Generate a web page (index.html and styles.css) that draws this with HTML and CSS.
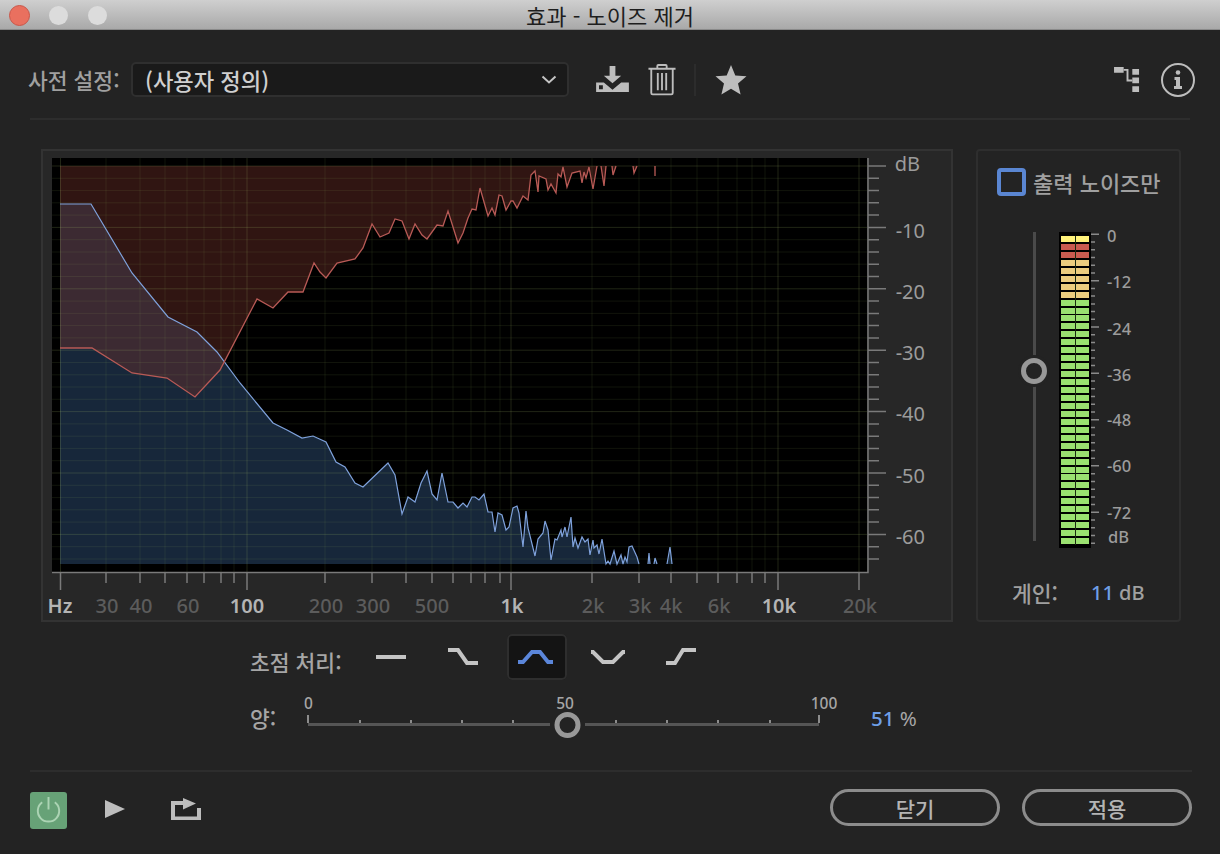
FILE: index.html
```html
<!DOCTYPE html>
<html lang="ko">
<head>
<meta charset="utf-8">
<title>효과 - 노이즈 제거</title>
<link rel="stylesheet" href="styles.css">
</head>
<body>
<div class="window">
  <header class="titlebar">
    <div class="lights"><span class="light red"></span><span class="light grey"></span><span class="light grey"></span></div>
    <div class="title">효과 - 노이즈 제거</div>
  </header>

  <section class="preset">
    <span class="preset-label">사전 설정:</span>
    <div class="select">
      <span>(사용자 정의)</span>
      <svg class="chev" viewBox="0 0 16 10"><path d="M1.5 1.5 8 7.500l6.500-6"/></svg>
    </div>
    <svg class="tool dl" viewBox="0 0 36 28"><path class="solid" d="M15 0h6v10h6L18 18 9 10h6z"/><path class="solid" fill-rule="evenodd" d="M1 17h8l9 7.500L27 17h8v10H1zM4 20v4h4v-4z"/></svg>
    <svg class="tool trash" viewBox="0 0 30 34"><path class="line" d="M.5 5.500h29M10 5V2.500q0-1 1-1h8q1 0 1 1V5M3.500 6v25.500q0 1.500 1.500 1.500h20q1.500 0 1.500-1.500V6M10.500 10v18.500M15 10v18.500M19.500 10v18.500"/></svg>
    <span class="tool-sep"></span>
    <svg class="tool star" viewBox="0 0 32 30"><path class="solid" d="M16 0l4.300 10.400 11.200.9-8.500 7.300 2.600 11L16 23.700 6.400 29.600l2.600-11L.5 11.300l11.200-.9z"/></svg>
    <svg class="tool route" viewBox="0 0 28 26"><path class="solid" d="M0 0h10v6H0zM19 2h7v6h-7zM19 11h7v6h-7zM19 20h7v6h-7z"/><path class="line" d="M10 3h4v11h5"/></svg>
    <svg class="tool info" viewBox="0 0 36 36"><circle class="line" cx="18" cy="18" r="16"/><circle class="solid" cx="18" cy="10.500" r="2.300"/><path class="solid" d="M14.500 15h5.500v9h2v3h-8v-3h2v-6h-1.500z"/></svg>
  </section>

  <section class="main">
    <div class="graph">
      <svg class="plot" viewBox="41 149 912 473">
        <rect class="bg-black" x="52" y="158" width="815" height="414"/>
        <path class="blue-fill" d="M60 564V204H91L132 273 168 317 197 332 217 352 240 383 273 423 287 430 302 438 313 436 326 442 336 462 345 467 355 483 363 487 388 463 395 475 402 514 408 497 415 502 421 483 427 471 432 494 437 500 442 473 448 502 453 502 458 508 463 503 467 507 472 497 475 497 479 500 484 494 488 512 492 512 495 532 498 513 502 515 506 530 509 527 513 508 517 506 519 513 523 547 526 511 528 528 535 556 538 539 543 533 545 521 548 530 551 560 555 539 557 540 561 530 562 537 565 527 567 537 571 517 573 547 575 538 578 548 582 537 585 542 588 539 590 555 593 540 594 548 597 545 599 554 602 539 606 564 608 561 610 564 614 551 617 564 621 555 623 564 625 557 627 562 629 547 632 546 637 557 639 564ZM648 564 649 553 650 564ZM654 564 655 558 657 564ZM667 564 670 547 672 564Z"/>
        <path class="red-fill" d="M60 166V348H92L132 373 167 378 195 397 220 370 257 299 273 308 288 292 303 292 314 263 320 272 326 278 337 263 355 259 363 248 372 224 380 237 389 233 395 219 402 221 409 239 415 224 422 235 427 239 437 225 443 226 448 211 453 227 458 243 463 233 468 218 472 209 476 210 480 188 488 216 492 208 495 215 499 195 502 196 506 210 511 201 513 201 517 208 523 196 528 200 531 175 535 171 538 192 539 176 546 179 548 190 551 184 556 193 558 174 561 177 563 167 567 187 572 173 580 171 582 183 584 172 586 178 589 167 593 189 597 166 601 166 604 186 606 166ZM612 166 613 175 616 166ZM633 166 634 173 637 166ZM654.500 166 655 176 655.500 166Z"/>
        <path class="grid" d="M52 178.300H867M52 190.600H867M52 202.800H867M52 215.100H867M52 239.700H867M52 252H867M52 264.200H867M52 276.500H867M52 301.100H867M52 313.400H867M52 325.600H867M52 337.900H867M52 362.500H867M52 374.800H867M52 387H867M52 399.300H867M52 423.900H867M52 436.200H867M52 448.400H867M52 460.700H867M52 485.300H867M52 497.600H867M52 509.800H867M52 522.100H867M52 546.700H867M52 559H867M106 158V572M140 158V572M165 158V572M187 158V572M204 158V572M221 158V572M234 158V572M325 158V572M372 158V572M406 158V572M432 158V572M453 158V572M471 158V572M485 158V572M500 158V572M592 158V572M639 158V572M671 158V572M697 158V572M718 158V572M737 158V572M752 158V572M765 158V572"/>
        <path class="grid-major" d="M52 166H867M52 227.400H867M52 288.800H867M52 350.200H867M52 411.600H867M52 473H867M52 534.400H867M60.500 158V572M247 158V572M511 158V572M778 158V572M859 158V572"/>
        <path class="blue-line" d="M60 204H91L132 273 168 317 197 332 217 352 240 383 273 423 287 430 302 438 313 436 326 442 336 462 345 467 355 483 363 487 388 463 395 475 402 514 408 497 415 502 421 483 427 471 432 494 437 500 442 473 448 502 453 502 458 508 463 503 467 507 472 497 475 497 479 500 484 494 488 512 492 512 495 532 498 513 502 515 506 530 509 527 513 508 517 506 519 513 523 547 526 511 528 528 535 556 538 539 543 533 545 521 548 530 551 560 555 539 557 540 561 530 562 537 565 527 567 537 571 517 573 547 575 538 578 548 582 537 585 542 588 539 590 555 593 540 594 548 597 545 599 554 602 539 606 564 608 561 610 564 614 551 617 564 621 555 623 564 625 557 627 562 629 547 632 546 637 557 639 564M648 564 649 553 650 564M654 564 655 558 657 564M667 564 670 547 672 564"/>
        <path class="red-line" d="M60 348H92L132 373 167 378 195 397 220 370 257 299 273 308 288 292 303 292 314 263 320 272 326 278 337 263 355 259 363 248 372 224 380 237 389 233 395 219 402 221 409 239 415 224 422 235 427 239 437 225 443 226 448 211 453 227 458 243 463 233 468 218 472 209 476 210 480 188 488 216 492 208 495 215 499 195 502 196 506 210 511 201 513 201 517 208 523 196 528 200 531 175 535 171 538 192 539 176 546 179 548 190 551 184 556 193 558 174 561 177 563 167 567 187 572 173 580 171 582 183 584 172 586 178 589 167 593 189 597 166M601 166 604 186 606 166M612 166 613 175 616 166M633 166 634 173 637 166M655 166V176"/>
        <path class="axis" d="M52 572.500H868V158M106 572V583M140 572V583M165 572V583M187 572V583M204 572V583M221 572V583M234 572V583M325 572V583M372 572V583M406 572V583M432 572V583M453 572V583M471 572V583M485 572V583M500 572V583M592 572V583M639 572V583M671 572V583M697 572V583M718 572V583M737 572V583M752 572V583M765 572V583M60.500 572V590M247 572V590M511 572V590M778 572V590M859 572V590M868 178.300H879M868 190.600H879M868 202.800H879M868 215.100H879M868 239.700H879M868 252H879M868 264.200H879M868 276.500H879M868 301.100H879M868 313.400H879M868 325.600H879M868 337.900H879M868 362.500H879M868 374.800H879M868 387H879M868 399.300H879M868 423.900H879M868 436.200H879M868 448.400H879M868 460.700H879M868 485.300H879M868 497.600H879M868 509.800H879M868 522.100H879M868 546.700H879M868 559H879M868 166H886M868 227.400H886M868 288.800H886M868 350.200H886M868 411.600H886M868 473H886M868 534.400H886"/>
        <g class="xl">
          <text class="hi" x="60" y="613">Hz</text>
          <text x="107" y="613">30</text><text x="141" y="613">40</text><text x="188" y="613">60</text>
          <text class="hi" x="247" y="613">100</text>
          <text x="326" y="613">200</text><text x="373" y="613">300</text><text x="432" y="613">500</text>
          <text class="hi" x="512" y="613">1k</text>
          <text x="593" y="613">2k</text><text x="640" y="613">3k</text><text x="671" y="613">4k</text><text x="719" y="613">6k</text>
          <text class="hi" x="779" y="613">10k</text>
          <text x="860" y="613">20k</text>
        </g>
        <g class="yl">
          <text x="920" y="171">dB</text><text x="925" y="238">-10</text><text x="925" y="299">-20</text><text x="925" y="360">-30</text><text x="925" y="421">-40</text><text x="925" y="483">-50</text><text x="925" y="544">-60</text>
        </g>
      </svg>
    </div>

    <aside class="side">
      <label class="check"><span class="box"></span><span>출력 노이즈만</span></label>
      <div class="meter-row">
        <div class="vslider"><span class="vthumb"></span></div>
        <div class="meter"></div>
        <svg class="scale" viewBox="1092 222 70 330">
          <path class="tick" d="M1092 242H1096M1092 249.800H1096M1092 257.500H1096M1092 265.200H1096M1092 273H1096M1092 288.400H1096M1092 296.100H1096M1092 303.900H1096M1092 311.600H1096M1092 319.300H1096M1092 334.700H1096M1092 342.500H1096M1092 350.200H1096M1092 357.900H1096M1092 365.600H1096M1092 381H1096M1092 388.800H1096M1092 396.500H1096M1092 404.200H1096M1092 412H1096M1092 427.400H1096M1092 435.100H1096M1092 442.800H1096M1092 450.500H1096M1092 458.300H1096M1092 473.700H1096M1092 481.400H1096M1092 489.200H1096M1092 496.900H1096M1092 504.600H1096M1092 520H1096M1092 527.800H1096M1092 535.500H1096M1092 543.200H1096M1092 234.300H1100M1092 280.700H1100M1092 327H1100M1092 373.300H1100M1092 419.700H1100M1092 465.800H1100M1092 512.300H1100"/>
          <g class="sl">
            <text x="1108" y="242">0</text><text x="1108" y="288">-12</text><text x="1108" y="335">-24</text><text x="1108" y="381">-36</text><text x="1108" y="426">-48</text><text x="1108" y="472">-60</text><text x="1108" y="519">-72</text><text x="1109" y="543">dB</text>
          </g>
        </svg>
      </div>
      <div class="gain"><span>게인:</span><span class="gain-val"><b>11</b> dB</span></div>
    </aside>
  </section>

  <section class="focus">
    <span class="ctl-label">초점 처리:</span>
    <div class="shapes">
      <button class="shape"><svg viewBox="0 0 60 46"><path d="M15 23H45"/></svg></button>
      <button class="shape"><svg viewBox="0 0 60 46"><path d="M14 16H24L33 29H44"/></svg></button>
      <button class="shape on"><svg viewBox="0 0 60 46"><path d="M11 28H16L25 18H33L41 28H46"/></svg></button>
      <button class="shape"><svg viewBox="0 0 60 46"><path d="M11 18H13L23 28H33L43 18H45"/></svg></button>
      <button class="shape"><svg viewBox="0 0 60 46"><path d="M13 29H22L30 16H43"/></svg></button>
    </div>
  </section>

  <section class="amount">
    <span class="ctl-label amt">양:</span>
    <svg class="amt-slider" viewBox="295 692 560 50">
      <path class="track" d="M308 724.500H550M585 724.500H819"/>
      <path class="amt-tick" d="M308 715V723M360 720V723M411 720V723M462 720V723M513 720V723M616 720V723M667 720V723M718 720V723M770 720V723M819 715V723"/>
      <g class="al"><text x="308.500" y="709">0</text><text x="565" y="709">50</text><text x="824" y="709">100</text></g>
      <circle class="amt-thumb" cx="567.500" cy="725" r="10.500"/>
    </svg>
    <span class="amt-val"><b>51</b> %</span>
  </section>

  <footer class="footer">
    <div class="foot-left">
      <div class="power"><svg viewBox="0 0 36 36"><path d="M11.500 9.500a11 11 0 1 0 13 0M18 4v13"/></svg></div>
      <svg class="play" viewBox="0 0 20 18"><path d="M0 0 20 9 0 18z"/></svg>
      <svg class="loop" viewBox="0 0 30 22"><path d="M0 3h12V0l13 5.500-13 6V7H4v11.500h22V10h4v12H0z"/></svg>
    </div>
    <div class="foot-right">
      <button class="btn">닫기</button>
      <button class="btn">적용</button>
    </div>
  </footer>
</div>
</body>
</html>
```

FILE: styles.css
```css
* { box-sizing: border-box; }
html, body { margin: 0; padding: 0; background: #232323; }
body { font-family: "Noto Sans CJK KR", "Noto Sans", sans-serif; overflow: hidden; }
.window { width: 1220px; height: 854px; display: flex; flex-direction: column; background: #232323; color: #a6a6a6; }

.titlebar { height: 30px; flex: none; position: relative; display: flex; align-items: center; justify-content: center; background: linear-gradient(#cfcfcf, #a9a9a9); border-bottom: 1px solid #8a8a8a; }
.lights { position: absolute; left: 0; top: 0; height: 30px; display: flex; align-items: center; padding-left: 9px; }
.light { width: 19px; height: 19px; border-radius: 50%; margin-right: 20px; background: #dcdcdc; }
.light.red { width: 21px; height: 21px; margin-right: 19px; background: #e9705f; border: 1px solid #c9574a; }
.title { font-size: 22px; color: #1e1e1e; line-height: 28px; }

.preset { height: 90px; flex: none; margin: 0 30px; padding: 32px 0 21px; display: flex; align-items: center; position: relative; border-bottom: 2px solid #2d2d2d; }
.preset-label { font-size: 21.500px; font-weight: 500; margin-left: -2px; width: 103px; white-space: nowrap; color: #a0a0a0; }
.select { width: 438px; height: 35px; background: #1a1a1a; border: 2px solid #2f2f2f; border-radius: 5px; display: flex; align-items: center; justify-content: space-between; padding: 0 10px 0 12px; font-size: 22.200px; font-weight: 500; color: #cfcfcf; }
.chev { width: 16px; height: 10px; fill: none; stroke: #c4c4c4; stroke-width: 2; }
.tool { flex: none; }
.solid { fill: #bdbdbd; }
.line { fill: none; stroke: #bdbdbd; stroke-width: 2; }
.dl { width: 35px; height: 27px; margin-left: 26px; }
.trash { width: 28px; height: 33px; margin-left: 18px; }
.tool-sep { width: 2px; height: 32px; background: #2c2c2c; margin-left: 18px; }
.star { width: 32px; height: 30px; margin-left: 19px; }
.route { width: 27px; height: 25px; margin-left: auto; }
.info { width: 36px; height: 36px; margin-left: 19px; margin-right: -6px; }

.main { flex: none; height: 473px; margin: 29px 39px 0 41px; display: flex; justify-content: space-between; }
.graph { width: 912px; height: 473px; border: 2px solid #333; background: #272727; position: relative; }
.plot { position: absolute; left: -2px; top: -2px; width: 912px; height: 473px; display: block; }
.bg-black { fill: #000; }
.red-fill { fill: #6e3028; fill-opacity: .44; }
.blue-fill { fill: #33567e; fill-opacity: .46; }
.grid { fill: none; stroke: #98b860; stroke-opacity: .11; stroke-width: 1; }
.grid-major { fill: none; stroke: #a0b868; stroke-opacity: .2; stroke-width: 1; }
.red-line { fill: none; stroke: #b85a56; stroke-width: 1.300; }
.blue-line { fill: none; stroke: #7fa2dc; stroke-width: 1.200; }
.axis { fill: none; stroke: #7a7a7a; stroke-width: 1.500; }
.xl text { font-family: "Noto Sans", sans-serif; font-size: 20px; font-weight: 500; text-anchor: middle; fill: #5c5c5c; }
.xl .hi { fill: #b4b4b4; font-weight: 600; }
.yl text { font-family: "Noto Sans", sans-serif; font-size: 20px; text-anchor: end; fill: #9c9c9c; }

.side { width: 205px; height: 473px; border: 2px solid #2e2e2e; border-radius: 4px; display: flex; flex-direction: column; }
.check { display: flex; align-items: center; gap: 7px; margin: 17px 0 0 19px; height: 28px; font-size: 22px; font-weight: 500; color: #a0a0a0; white-space: nowrap; }
.box { width: 29px; height: 28px; border: 4px solid #5a86d2; border-radius: 4px; flex: none; }
.meter-row { display: flex; margin: 36px 0 0 43px; height: 316px; }
.vslider { width: 26px; height: 309px; position: relative; }
.vslider::before { content: ""; position: absolute; left: 11.500px; top: 0; width: 3px; height: 100%; background: #4a4a4a; }
.vthumb { position: absolute; left: 0; top: 126px; width: 26px; height: 26px; border: 5px solid #989898; border-radius: 50%; background: #232323; box-shadow: 0 0 0 3px #232323; }
.meter { width: 32px; height: 316px; margin-left: 12px; background-color: #000; border: solid #000; border-width: 4px 2px 3px; position: relative; background-clip: content-box; background-image: repeating-linear-gradient(#0000 0 6px, #000 6px 7.950px), linear-gradient(#fff27a 0 7.950px, #c95b50 7.950px 23.850px, #eccd7e 23.850px 63.600px, #9ae070 63.600px); }
.meter::after { content: ""; position: absolute; left: 13.500px; top: 0; width: 1.500px; height: 100%; background: #1a2a10; }
.scale { width: 70px; height: 330px; margin-top: -10px; display: block; flex: none; }
.tick { fill: none; stroke: #8a8a8a; stroke-width: 1.500; }
.sl text { font-family: "Noto Sans", sans-serif; font-size: 16.500px; font-weight: 500; fill: #9c9c9c; }
.gain { display: flex; align-items: center; margin: 29px 0 0 34px; height: 30px; font-size: 21.500px; font-weight: 500; color: #a0a0a0; }
.gain-val { margin-left: 33px; font-size: 20px; font-family: "Noto Sans", sans-serif; }
.gain-val b, .amt-val b { color: #6f9fe6; font-weight: 500; }

.focus { flex: none; height: 46px; margin-top: 12px; padding-left: 250px; display: flex; align-items: center; }
.ctl-label { font-size: 21.500px; font-weight: 500; color: #a6a6a6; white-space: nowrap; width: 111px; flex: none; padding-top: 8px; }
.shapes { display: flex; gap: 13px; }
.shape { width: 60px; height: 46px; padding: 0; background: none; border: 0; border-radius: 5px; }
.shape svg { display: block; width: 60px; height: 46px; fill: none; stroke: #c4c4c4; stroke-width: 4; }
.shape.on { background: #141414; box-shadow: 0 0 0 2px #2e2e2e inset; }
.shape.on svg { stroke: #5b86da; }

.amount { flex: none; height: 50px; margin-top: 12px; padding-left: 250px; display: flex; align-items: center; }
.amt { width: 45px; padding-top: 0; }
.amt-slider { width: 560px; height: 50px; flex: none; display: block; }
.track { fill: none; stroke: #555; stroke-width: 3; }
.amt-tick { fill: none; stroke: #8c8c8c; stroke-width: 2; }
.al text { font-family: "Noto Sans", sans-serif; font-size: 15.500px; font-weight: 500; text-anchor: middle; fill: #a6a6a6; }
.amt-thumb { fill: #232323; stroke: #989898; stroke-width: 5; }
.amt-val { margin: 2px 0 0 16px; font-size: 20.500px; font-family: "Noto Sans", sans-serif; }

.footer { flex: none; margin: 28px 28px 0 30px; border-top: 2px solid #2d2d2d; padding-top: 17px; display: flex; justify-content: space-between; align-items: flex-start; }
.foot-left { display: flex; align-items: center; padding-top: 3px; }
.power { width: 37px; height: 37px; border-radius: 3px; background: #67a277; padding: 1px; }
.power svg { display: block; width: 35px; height: 35px; fill: none; stroke: #acd4b4; stroke-width: 2; }
.play { width: 20px; height: 18px; margin: 0 0 4px 38px; fill: #bdbdbd; }
.loop { width: 30px; height: 22px; margin: 0 0 4px 46px; fill: #bdbdbd; }
.foot-right { display: flex; gap: 22px; }
.btn { width: 170px; height: 37px; border: 3px solid #8c8c8c; border-radius: 19px; background: #232323; color: #b4b4b4; font-family: "Noto Sans CJK KR", sans-serif; font-size: 21px; font-weight: 500; padding: 0; line-height: 28px; }
```
